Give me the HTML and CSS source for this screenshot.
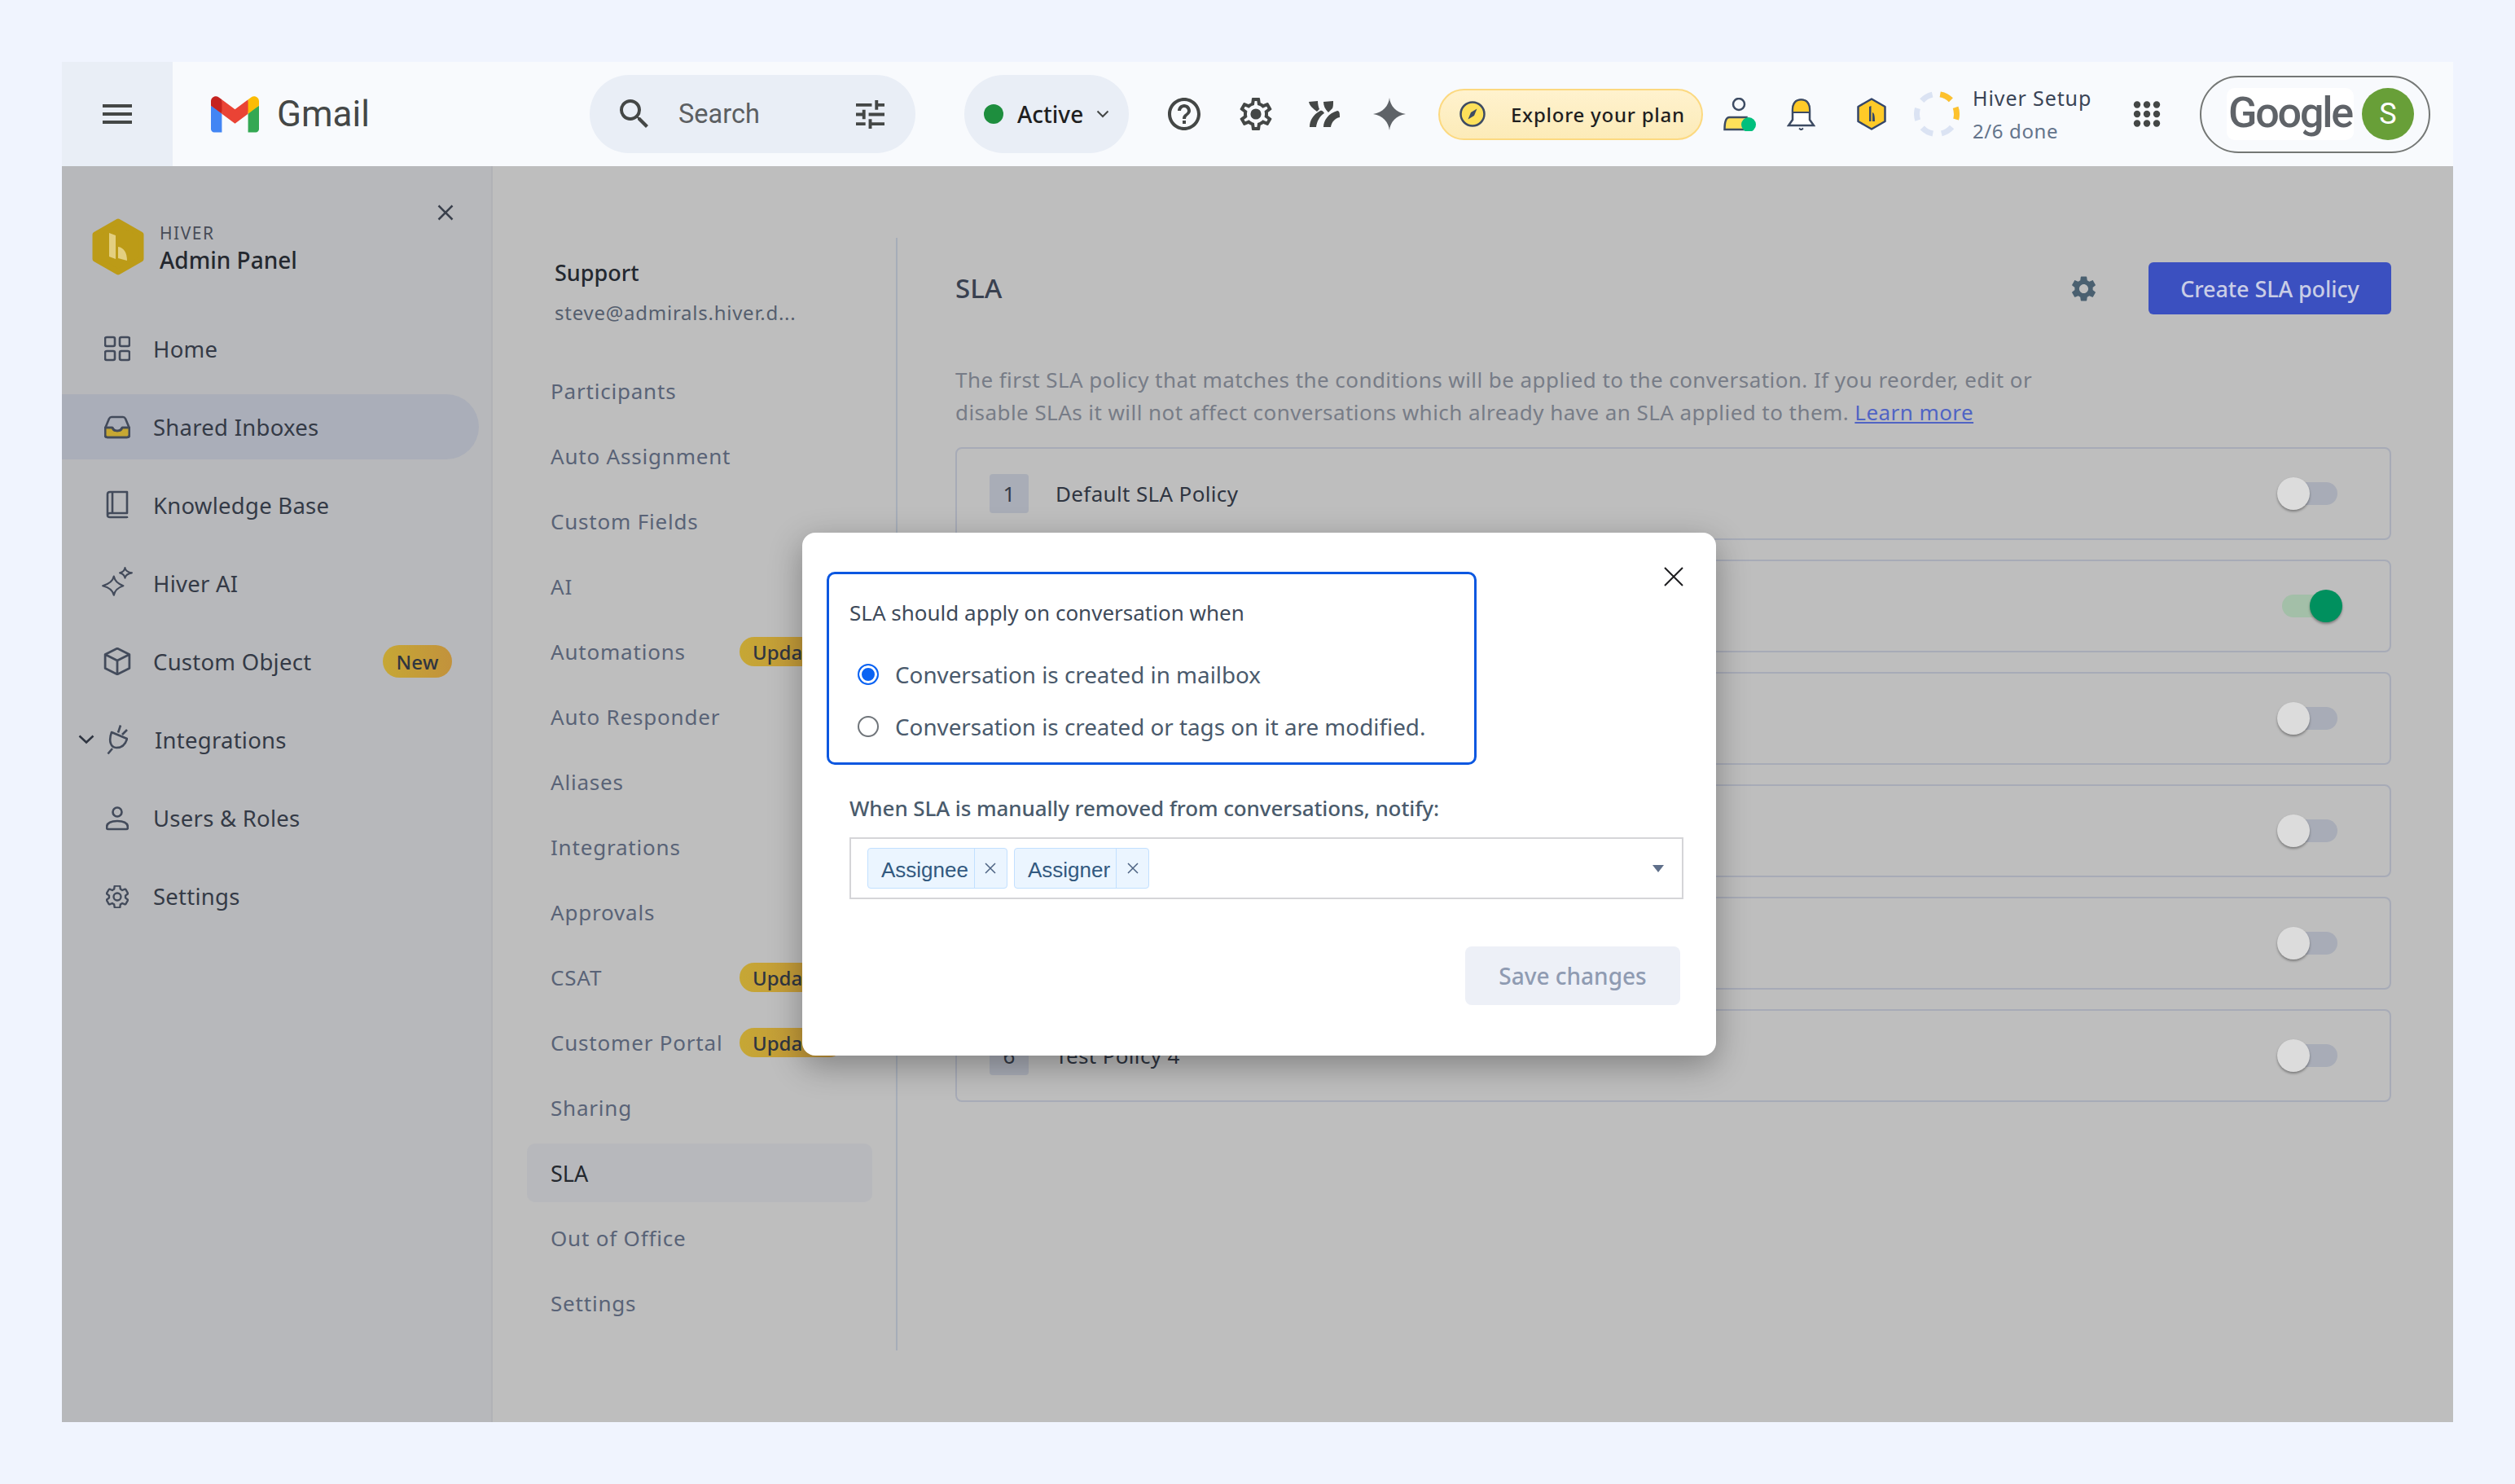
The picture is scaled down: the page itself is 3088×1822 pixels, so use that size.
FILE: index.html
```html
<!DOCTYPE html>
<html lang="en">
<head>
<meta charset="utf-8">
<title>Hiver Admin Panel - SLA</title>
<link rel="stylesheet" href="styles.css">
</head>
<body>
<div class="frame">
  <header class="topbar">
    <div class="menu-col">
      <svg class="menu-icon" viewBox="0 0 36 24"><path d="M0 0h36v4H0zM0 10h36v4H0zM0 20h36v4H0z"/></svg>
    </div>
    <div class="logo-col">
      <svg class="gmail-logo" viewBox="0 0 256 193"><path fill="#4285F4" d="M58.182 192.05V93.14L27.507 65.077 0 49.504v125.091c0 9.658 7.825 17.455 17.455 17.455h40.727Z"/><path fill="#34A853" d="M197.818 192.05h40.727c9.659 0 17.455-7.826 17.455-17.455V49.505l-31.156 17.837-27.026 25.798v98.91Z"/><path fill="#EA4335" d="m58.182 93.14-4.174-38.647 4.174-36.989L128 69.868l69.818-52.364 4.669 34.992-4.669 40.644L128 145.504z"/><path fill="#FBBC04" d="M197.818 17.504V93.14L256 49.504V26.231c0-21.585-24.64-33.89-41.89-20.945l-16.292 12.218Z"/><path fill="#C5221F" d="m0 49.504 26.759 20.07L58.182 93.14V17.504L41.89 5.286C24.61-7.66 0 4.646 0 26.23v23.273Z"/></svg>
      <span class="gmail-word">Gmail</span>
    </div>
    <div class="search">
      <svg class="search-icon" viewBox="3 3 18 18"><path d="M15.5 14h-.79l-.28-.27A6.47 6.47 0 0 0 16 9.5 6.5 6.5 0 1 0 9.5 16c1.61 0 3.09-.59 4.23-1.57l.27.28v.79l5 4.99L20.49 19l-4.99-5zm-6 0C7.01 14 5 11.99 5 9.5S7.01 5 9.5 5 14 7.01 14 9.5 11.99 14 9.5 14z"/></svg>
      <span class="search-text">Search</span>
      <svg class="tune-icon" viewBox="3 3 18 18"><path d="M3 17v2h6v-2H3zM3 5v2h10V5H3zm10 16v-2h8v-2h-8v-2h-2v6h2zM7 9v2H3v2h4v2h2V9H7zm14 4v-2H11v2h10zm-6-4h2V7h4V5h-4V3h-2v6z"/></svg>
    </div>
    <div class="status">
      <span class="status-dot"></span>
      <span class="status-text">Active</span>
      <svg class="status-caret" viewBox="0 0 16 10"><path d="M1.5 1.5 8 8l6.500-6.500" fill="none" stroke="#444746" stroke-width="2"/></svg>
    </div>
    <svg class="tool tool-help" viewBox="2 2 20 20"><path d="M11 18h2v-2h-2v2zm1-16C6.480 2 2 6.480 2 12s4.480 10 10 10 10-4.480 10-10S17.520 2 12 2zm0 18c-4.410 0-8-3.590-8-8s3.590-8 8-8 8 3.590 8 8-3.590 8-8 8zm0-14c-2.210 0-4 1.790-4 4h2c0-1.100.9-2 2-2s2 .9 2 2c0 2-3 1.750-3 5h2c0-2.250 3-2.500 3-5 0-2.210-1.790-4-4-4z"/></svg>
    <svg class="tool tool-gear" viewBox="2 2 20 20"><path d="M19.430 12.980c.04-.32.07-.64.07-.98 0-.34-.03-.66-.07-.98l2.110-1.650c.19-.15.24-.42.12-.64l-2-3.460c-.09-.16-.26-.25-.44-.25-.06 0-.12.01-.17.03l-2.490 1c-.52-.4-1.080-.73-1.690-.98l-.38-2.650C14.460 2.180 14.250 2 14 2h-4c-.25 0-.46.18-.49.42l-.38 2.650c-.61.25-1.170.59-1.690.98l-2.490-1c-.06-.02-.12-.03-.18-.03-.17 0-.34.09-.43.25l-2 3.460c-.13.22-.07.49.12.64l2.110 1.650c-.04.32-.07.65-.07.98 0 .33.03.66.07.98l-2.110 1.650c-.19.15-.24.42-.12.64l2 3.460c.09.16.26.25.44.25.06 0 .12-.01.17-.03l2.490-1c.52.4 1.080.73 1.690.98l.38 2.650c.03.24.24.42.49.42h4c.25 0 .46-.18.49-.42l.38-2.650c.61-.25 1.170-.59 1.690-.98l2.490 1c.06.02.12.03.18.03.17 0 .34-.09.43-.25l2-3.460c.12-.22.07-.49-.12-.64l-2.110-1.650zM17.450 11.270c.04.31.05.52.05.73 0 .21-.02.43-.05.73l-.14 1.130.89.7 1.080.84-.7 1.210-1.270-.51-1.040-.42-.9.68c-.43.32-.84.56-1.250.73l-1.060.43-.16 1.130-.2 1.350h-1.400l-.19-1.350-.16-1.130-1.060-.43c-.43-.18-.83-.41-1.230-.71l-.91-.7-1.060.43-1.270.51-.7-1.210 1.080-.84.89-.7-.14-1.130c-.03-.31-.05-.54-.05-.74s.02-.43.05-.73l.14-1.130-.89-.7-1.080-.84.7-1.210 1.270.51 1.040.42.9-.68c.43-.32.84-.56 1.250-.73l1.060-.43.16-1.130.2-1.350h1.390l.19 1.350.16 1.130 1.060.43c.43.18.83.41 1.230.71l.91.7 1.060-.43 1.270-.51.7 1.210-1.070.85-.89.7.14 1.130z"/><circle cx="12" cy="12" r="3.300"/></svg>
    <svg class="tool-wave" viewBox="0 0 38 33"><path d="M0 1 11 0c0 4 1 8 2 10l-3 3C5 9 1 6 0 1zM18 1 30 0c0 4 0 7-1 9l-5 5c-4-4-6-8-6-13zM1 32c0-8 4-15 13-20 2-1 4 1 5 3-6 4-9 10-10 17zM18 32c0-8 6-17 17-20 3 0 3 4 3 8-6 1-10 6-11 12z"/></svg>
    <svg class="tool tool-spark" viewBox="0 0 40 40"><path d="M20 0c1 10 8 18 20 20-12 2-19 10-20 20-1-10-8-18-20-20C12 18 19 10 20 0z"/></svg>
    <div class="explore">
      <svg class="compass" viewBox="0 0 32 32"><circle cx="16" cy="16" r="14.500" fill="#fde05a" stroke="#3d4b63" stroke-width="2.500"/><path d="M21.500 9.500 18 18l-7.500 4.500L14 14z" fill="#3d4b63"/></svg>
      <span class="explore-text">Explore your plan</span>
    </div>
    <svg class="people" viewBox="0 0 40 41"><circle cx="19" cy="8" r="7" fill="none" stroke="#3d4b63" stroke-width="2.500"/><path d="M1.500 39c0-9 2-15 6-15h21v15z" fill="#fde05a" stroke="#3d4b63" stroke-width="2.500"/><circle cx="31" cy="33" r="9" fill="#00bf7d"/></svg>
    <svg class="bell" viewBox="0 0 35 39"><path d="M7 26V15C7 5 11 1.500 17.500 1.500S28 5 28 15v11l5 7H2z" fill="#fff" stroke="#3d4b63" stroke-width="2.500"/><path d="M7 17v-2C7 5 11 1.500 17.500 1.500S28 5 28 15v2z" fill="#ffca28" stroke="#3d4b63" stroke-width="2"/><path d="M15 36.500l2.500 2 2.500-2" fill="none" stroke="#3d4b63" stroke-width="2"/></svg>
    <svg class="hexa" viewBox="0 0 36 40"><path d="M18 1.500 34.500 11v18L18 38.500 1.500 29V11z" fill="#ffca28" stroke="#34466a" stroke-width="2.500" stroke-linejoin="round"/><path d="M15 11l2.500-1v19H15zM19 18c3 1 3 7 3 11h-3z" fill="#34466a"/></svg>
    <svg class="ring" viewBox="0 0 56 56"><circle cx="28" cy="28" r="24.500" fill="none" stroke="#dbe3f3" stroke-width="7" stroke-dasharray="15 10.660" transform="rotate(-80 28 28)"/><circle cx="28" cy="28" r="24.500" fill="none" stroke="#fdc12d" stroke-width="7" stroke-dasharray="15 10.660 15 200" transform="rotate(-80 28 28)"/></svg>
    <div class="setup">
      <span class="setup-title">Hiver Setup</span>
      <span class="setup-sub">2/6 done</span>
    </div>
    <svg class="apps" viewBox="0 0 34 32"><g fill="#444746"><circle cx="5" cy="4.500" r="4.200"/><circle cx="17" cy="4.500" r="4.200"/><circle cx="29" cy="4.500" r="4.200"/><circle cx="5" cy="16" r="4.200"/><circle cx="17" cy="16" r="4.200"/><circle cx="29" cy="16" r="4.200"/><circle cx="5" cy="27.500" r="4.200"/><circle cx="17" cy="27.500" r="4.200"/><circle cx="29" cy="27.500" r="4.200"/></g></svg>
    <div class="account">
      <span class="google-word">Google</span>
      <span class="avatar">S</span>
    </div>
  </header>

  <div class="workspace">
    <aside class="sidebar">
      <div class="side-head">
        <div class="brand">
          <svg class="brand-hex" viewBox="0 0 64 70"><path d="M32 4 60 20v30L32 66 4 50V20z" fill="#bc9b17" stroke="#bc9b17" stroke-width="7" stroke-linejoin="round"/><path d="M21 18l8 3v29l-8-3zM32 35c7 1 11 7 11 17l-11-3z" fill="#e3cf80"/></svg>
          <div class="brand-text">
            <span class="brand-top">HIVER</span>
            <span class="brand-name">Admin Panel</span>
          </div>
        </div>
        <svg class="side-close" viewBox="0 0 20 20"><path d="M1.500 1.500l17 17M18.500 1.500l-17 17" stroke="#3a404c" stroke-width="2.500"/></svg>
      </div>
      <nav class="side-nav">
        <a class="side-item"><span class="side-icon"><svg viewBox="0 0 32 32" class="ic"><rect x="1" y="2" width="12" height="11" rx="2"/><rect x="19" y="2" width="12" height="11" rx="2"/><rect x="1" y="19" width="12" height="11" rx="2"/><rect x="19" y="19" width="12" height="11" rx="2"/></svg></span><span>Home</span></a>
        <a class="side-item is-active"><span class="side-icon"><svg viewBox="0 0 32 32" class="ic"><path d="M1 17h9c1 3 3 4 6 4s5-1 6-4h9v9c0 2-1 3-3 3H4c-2 0-3-1-3-3z" fill="#c6a733"/><path d="M1 26v-8L6 6c.5-1 1.500-2 3-2h14c1.500 0 2.500 1 3 2l5 12v8c0 2-1 3-3 3H4c-2 0-3-1-3-3zM1 17h9c1 3 3 4 6 4s5-1 6-4h9"/></svg></span><span>Shared Inboxes</span></a>
        <a class="side-item"><span class="side-icon"><svg viewBox="0 0 28 36" class="ic ic-book"><path d="M2 30V5c0-2 1-3 3-3h21v26H5c-2 0-3 1-3 2.500S3 33 5 33h21v1M8 2v26"/></svg></span><span>Knowledge Base</span></a>
        <a class="side-item"><span class="side-icon"><svg viewBox="0 0 38 38" class="ic ic-ai"><path d="M15 11c1 5 5 9 11 11-6 2-10 5-11 11-1-6-5-9-13-11 8-2 12-6 13-11zM28 1c.5 3 2.500 5 8 6-5.500 1-7.500 3-8 6-.5-3-2.500-5-6-6 3.500-1 5.500-3 6-6z"/></svg></span><span>Hiver AI</span></a>
        <a class="side-item"><span class="side-icon"><svg viewBox="0 0 32 32" class="ic ic-box"><path d="M16 1 30 8v16l-14 7-14-7V8zM2 8l14 7 14-7M16 15v16"/></svg></span><span>Custom Object</span><span class="new-badge">New</span></a>
        <a class="side-item side-item-tree"><svg class="tree-caret" viewBox="0 0 20 12"><path d="M1.500 1.500 10 9.500l8.500-8" fill="none" stroke="#2f3541" stroke-width="2.500"/></svg><span class="side-icon side-icon-plug"><svg viewBox="0 0 26 38" class="ic ic-plug"><path d="M1.500 36.500 7 30M17 1.500l-3 9M25 7l-6 6M6 10l19 8c-2 7-7 11-13 11-7 0-10-8-6-19z"/></svg></span><span>Integrations</span></a>
        <a class="side-item"><span class="side-icon"><svg viewBox="0 0 28 30" class="ic ic-user"><circle cx="14" cy="7" r="5.500"/><path d="M3 28c-1.500 0-2-1-2-2 0-5 4-8 13-8s13 3 13 8c0 1-.5 2-2 2z"/></svg></span><span>Users &amp; Roles</span></a>
        <a class="side-item"><span class="side-icon"><svg viewBox="2 2 20 20" class="ic ic-thin"><path d="M19.140 12.940c.04-.3.06-.61.06-.94 0-.32-.02-.64-.07-.94l2.030-1.580c.18-.14.23-.41.12-.61l-1.920-3.320c-.12-.22-.37-.29-.59-.22l-2.390.96c-.5-.38-1.030-.7-1.620-.94l-.36-2.540c-.04-.24-.24-.41-.48-.41h-3.840c-.24 0-.43.17-.47.41l-.36 2.540c-.59.24-1.130.57-1.620.94l-2.390-.96c-.22-.08-.47 0-.59.22L2.740 8.870c-.12.21-.08.47.12.61l2.030 1.580c-.05.3-.09.63-.09.94s.02.64.07.94l-2.030 1.580c-.18.14-.23.41-.12.61l1.920 3.320c.12.22.37.29.59.22l2.390-.96c.5.38 1.030.7 1.620.94l.36 2.540c.05.24.24.41.48.41h3.840c.24 0 .44-.17.47-.41l.36-2.540c.59-.24 1.130-.56 1.620-.94l2.390.96c.22.08.47 0 .59-.22l1.920-3.320c.12-.22.07-.47-.12-.61l-2.010-1.580z"/><circle cx="12" cy="12" r="3.200"/></svg></span><span>Settings</span></a>
      </nav>
    </aside>

    <section class="subnav">
      <div class="inbox-head">
        <div class="inbox-name">Support</div>
        <div class="inbox-mail">steve@admirals.hiver.d...</div>
      </div>
      <nav class="sub-list">
        <a class="sub-item">Participants</a>
        <a class="sub-item">Auto Assignment</a>
        <a class="sub-item">Custom Fields</a>
        <a class="sub-item">AI</a>
        <a class="sub-item">Automations<span class="up-badge">Updated</span></a>
        <a class="sub-item">Auto Responder</a>
        <a class="sub-item">Aliases</a>
        <a class="sub-item">Integrations</a>
        <a class="sub-item">Approvals</a>
        <a class="sub-item">CSAT<span class="up-badge">Updated</span></a>
        <a class="sub-item">Customer Portal<span class="up-badge">Updated</span></a>
        <a class="sub-item">Sharing</a>
        <a class="sub-item is-active">SLA</a>
        <a class="sub-item">Out of Office</a>
        <a class="sub-item">Settings</a>
      </nav>
    </section>

    <main class="content">
      <div class="content-head">
        <h1 class="content-title">SLA</h1>
        <svg class="content-gear" viewBox="3 2 18 20"><path d="M19.140 12.940c.04-.3.06-.61.06-.94 0-.32-.02-.64-.07-.94l2.030-1.580c.18-.14.23-.41.12-.61l-1.920-3.320c-.12-.22-.37-.29-.59-.22l-2.390.96c-.5-.38-1.030-.7-1.620-.94l-.36-2.540c-.04-.24-.24-.41-.48-.41h-3.840c-.24 0-.43.17-.47.41l-.36 2.540c-.59.24-1.130.57-1.620.94l-2.390-.96c-.22-.08-.47 0-.59.22L2.740 8.870c-.12.21-.08.47.12.61l2.030 1.580c-.05.3-.09.63-.09.94s.02.64.07.94l-2.030 1.580c-.18.14-.23.41-.12.61l1.920 3.320c.12.22.37.29.59.22l2.390-.96c.5.38 1.030.7 1.620.94l.36 2.540c.05.24.24.41.48.41h3.840c.24 0 .44-.17.47-.41l.36-2.540c.59-.24 1.130-.56 1.620-.94l2.390.96c.22.08.47 0 .59-.22l1.920-3.320c.12-.22.07-.47-.12-.61l-2.010-1.580zM12 15.600c-1.980 0-3.600-1.620-3.600-3.600s1.620-3.600 3.600-3.600 3.600 1.620 3.600 3.600-1.620 3.600-3.600 3.600z"/></svg>
        <button class="create-btn">Create SLA policy</button>
      </div>
      <p class="content-desc">The first SLA policy that matches the conditions will be applied to the conversation. If you reorder, edit or<br>disable SLAs it will not affect conversations which already have an SLA applied to them. <a class="learn">Learn more</a></p>
      <div class="policies">
        <div class="policy"><span class="policy-num">1</span><span class="policy-name">Default SLA Policy</span><span class="toggle"><span class="track"></span><span class="knob"></span></span></div>
        <div class="policy"><span class="policy-num"></span><span class="toggle is-on"><span class="track"></span><span class="knob"></span></span></div>
        <div class="policy"><span class="policy-num"></span><span class="toggle"><span class="track"></span><span class="knob"></span></span></div>
        <div class="policy"><span class="policy-num"></span><span class="toggle"><span class="track"></span><span class="knob"></span></span></div>
        <div class="policy"><span class="policy-num"></span><span class="toggle"><span class="track"></span><span class="knob"></span></span></div>
        <div class="policy"><span class="policy-num">6</span><span class="policy-name">Test Policy 4</span><span class="toggle"><span class="track"></span><span class="knob"></span></span></div>
      </div>
    </main>
  </div>

  <div class="modal">
    <svg class="modal-close" viewBox="0 0 24 24"><path d="M1 1l22 22M23 1 1 23" stroke="#1d1d1f" stroke-width="2"/></svg>
    <div class="apply-box">
      <div class="apply-title">SLA should apply on conversation when</div>
      <label class="radio-row"><span class="radio is-checked"></span>Conversation is created in mailbox</label>
      <label class="radio-row"><span class="radio"></span>Conversation is created or tags on it are modified.</label>
    </div>
    <div class="notify-label">When SLA is manually removed from conversations, notify:</div>
    <div class="select">
      <span class="chip"><span class="chip-label">Assignee</span><span class="chip-x"><svg viewBox="0 0 14 14"><path d="M1 1l12 12M13 1 1 13" stroke="#4d6383" stroke-width="1.500"/></svg></span></span>
      <span class="chip"><span class="chip-label">Assigner</span><span class="chip-x"><svg viewBox="0 0 14 14"><path d="M1 1l12 12M13 1 1 13" stroke="#4d6383" stroke-width="1.500"/></svg></span></span>
      <svg class="select-caret" viewBox="0 0 14 9"><path d="M0 0h14L7 9z"/></svg>
    </div>
    <div class="modal-foot"><button class="save-btn">Save changes</button></div>
  </div>
</div>
</body>
</html>
```
FILE: styles.css
```css
* { box-sizing: border-box; }
html, body { margin: 0; padding: 0; }
body {
  width: 3088px;
  height: 1822px;
  padding: 76px;
  background: #f0f4fe;
  font-family: "Noto Sans", "Open Sans", sans-serif;
  overflow: hidden;
}
a { display: flex; }
.frame {
  position: relative;
  width: 2936px;
  height: 1670px;
  display: flex;
  flex-direction: column;
  background: #bebebe;
}

/* top bar */
.topbar {
  flex: 0 0 128px;
  display: flex;
  align-items: center;
  background: #f8fafd;
}
.menu-col {
  width: 136px;
  height: 128px;
  display: flex;
  align-items: center;
  justify-content: center;
  background: #e9eef6;
}
.menu-icon { width: 36px; height: 24px; fill: #444746; }
.logo-col {
  width: 512px;
  display: flex;
  align-items: center;
  padding-left: 47px;
}
.gmail-logo { width: 59px; height: 45px; }
.gmail-word {
  margin-left: 22px;
  font-family: Roboto, sans-serif;
  font-size: 44px;
  line-height: 50px;
  color: #444746;
}
.search {
  width: 400px;
  height: 96px;
  display: flex;
  align-items: center;
  padding: 0 37px;
  border-radius: 48px;
  background: #e9eef6;
}
.search-icon { width: 36px; height: 36px; fill: #444746; }
.search-text {
  margin-left: 36px;
  font-family: Roboto, sans-serif;
  font-size: 32.500px;
  color: #5c5f62;
}
.tune-icon { margin-left: auto; width: 37px; height: 35px; fill: #444746; }
.status {
  width: 202px;
  height: 96px;
  margin-left: 60px;
  display: flex;
  align-items: center;
  padding-left: 24px;
  border-radius: 48px;
  background: #e9eef6;
}
.status-dot { width: 24px; height: 24px; border-radius: 50%; background: #1e8e3e; }
.status-text {
  margin-left: 17px;
  font-size: 28px;
  font-weight: 500;
  color: #1f1f1f;
}
.status-caret { margin-left: 16px; width: 16px; height: 10px; }
.tool { width: 40px; height: 40px; fill: #444746; flex: none; }
.tool-help { margin-left: 48px; }
.tool-gear { margin-left: 48px; }
.tool-wave { margin-left: 45px; width: 38px; height: 33px; fill: #444746; flex: none; }
.tool-spark { margin-left: 41px; fill: #5f6368; }
.explore {
  width: 325px;
  height: 63px;
  margin-left: 40px;
  display: flex;
  align-items: center;
  padding-left: 24px;
  border: 2px solid #fcd980;
  border-radius: 32px;
  background: linear-gradient(#fff2ce, #fcebb8);
}
.compass { width: 32px; height: 32px; }
.explore-text {
  margin-left: 31px;
  font-size: 24px;
  font-weight: 500;
  letter-spacing: 0.75px;
  color: #1f1f1f;
}
.people { width: 40px; height: 41px; margin-left: 25px; flex: none; }
.bell { width: 35px; height: 39px; margin-left: 38px; flex: none; }
.hexa { width: 36px; height: 40px; margin-left: 51px; flex: none; }
.ring { width: 56px; height: 56px; margin-left: 34px; flex: none; }
.setup {
  width: 145px;
  margin-left: 16px;
  display: flex;
  flex-direction: column;
  gap: 7px;
  white-space: nowrap;
}
.setup-title { font-size: 25px; line-height: 34px; color: #3a4456; letter-spacing: 0.9px; }
.setup-sub { font-size: 24px; line-height: 34px; color: #64748b; letter-spacing: 0.6px; }
.apps { width: 34px; height: 32px; margin-left: 52px; flex: none; }
.account {
  width: 283px;
  height: 95px;
  margin-left: 48px;
  display: flex;
  align-items: center;
  padding-left: 31px;
  border: 2px solid #747775;
  border-radius: 48px;
}
.google-word {
  width: 156px;
  height: 64px;
  display: flex;
  align-items: center;
  justify-content: center;
  padding-bottom: 4px;
  border-radius: 10px;
  background: #fff;
  font-family: Roboto, sans-serif;
  font-size: 52px;
  font-weight: 500;
  letter-spacing: -2.2px;
  color: #5f6368;
}
.avatar {
  width: 64px;
  height: 64px;
  margin-left: 10px;
  display: flex;
  align-items: center;
  justify-content: center;
  border-radius: 50%;
  background: #689f38;
  font-family: Roboto, sans-serif;
  font-size: 36px;
  color: #fff;
}

/* workspace */
.workspace { flex: 1; display: flex; min-height: 0; }

.sidebar {
  width: 529px;
  flex: none;
  background: #b7b8bb;
  border-right: 2px solid #b1b2b6;
}
.side-head {
  display: flex;
  justify-content: space-between;
  padding: 47px 46px 0 37px;
}
.brand { display: flex; align-items: center; margin-top: 17px; }
.brand-hex { width: 64px; height: 70px; }
.brand-text { margin-left: 19px; display: flex; flex-direction: column; }
.brand-top {
  margin-top: 2px;
  font-size: 21px;
  line-height: 28px;
  letter-spacing: 1.500px;
  color: #474c57;
}
.brand-name {
  margin-top: 1px;
  font-size: 28px;
  line-height: 36px;
  font-weight: 500;
  color: #24282f;
}
.side-close { width: 20px; height: 20px; }
.side-nav {
  margin-top: 50px;
  display: flex;
  flex-direction: column;
  gap: 16.100px;
}
.side-item {
  height: 80px;
  width: 512px;
  display: flex;
  align-items: center;
  padding: 0 33px 0 52px;
  border-radius: 0 40px 40px 0;
  font-size: 27.500px;
  letter-spacing: 0.25px;
  color: #343a46;
}
.side-item.is-active { background: #aaaeb9; }
.side-item-tree { padding-left: 20px; }
.side-icon {
  width: 32px;
  margin-right: 28px;
  display: flex;
  justify-content: center;
  flex: none;
}
.side-icon-plug { margin-left: 15px; margin-right: 33px; width: 26px; }
.tree-caret { width: 20px; height: 12px; flex: none; }
.ic {
  width: 32px;
  height: 32px;
  fill: none;
  stroke: #434b5b;
  stroke-width: 2.600;
  stroke-linejoin: round;
  flex: none;
}
.ic-ai { width: 40px; height: 40px; stroke-width: 2; }
.ic-box { width: 34px; height: 34px; }
.ic-book { width: 28px; height: 36px; }
.ic-plug { width: 26px; height: 38px; }
.ic-user { width: 28px; height: 30px; }
.ic-thin { width: 28px; height: 28px; stroke-width: 1.700; }
.new-badge {
  margin-left: auto;
  width: 85px;
  height: 40px;
  display: flex;
  align-items: center;
  justify-content: center;
  border-radius: 20px;
  background: linear-gradient(90deg, #c6a735, #c2923c);
  font-size: 24px;
  font-weight: 500;
  color: #2f3541;
}

.subnav {
  width: 497px;
  flex: none;
  margin-top: 88px;
  margin-bottom: 88px;
  border-right: 2px solid #a6adb8;
  overflow: hidden;
}
.inbox-head { padding: 23px 0 0 76px; }
.inbox-name {
  font-size: 27px;
  line-height: 40px;
  font-weight: 500;
  color: #24282f;
}
.inbox-mail {
  margin-top: 11px;
  font-size: 24px;
  line-height: 36px;
  letter-spacing: 0.75px;
  color: #555e6e;
}
.sub-list {
  margin: 42px 0 0 42px;
  width: 424px;
  display: flex;
  flex-direction: column;
  gap: 8px;
}
.sub-item {
  height: 72px;
  display: flex;
  align-items: center;
  justify-content: space-between;
  padding: 0 35px 0 29px;
  border-radius: 10px;
  font-size: 26px;
  letter-spacing: 0.8px;
  color: #596377;
}
.sub-item.is-active { background: #b7b8bc; color: #24282f; font-size: 27px; letter-spacing: 0; }
.up-badge {
  width: 128px;
  height: 36px;
  display: flex;
  align-items: center;
  padding-left: 16px;
  border-radius: 18px;
  background: linear-gradient(90deg, #c6a735, #c2923c);
  font-size: 24px;
  font-weight: 500;
  letter-spacing: 0;
  color: #2f3541;
}

.content { flex: 1; min-width: 0; padding: 118px 76px 0 71px; }
.content-head { height: 64px; display: flex; align-items: center; }
.content-title {
  margin: 0 0 2px;
  font-size: 33px;
  font-weight: 500;
  color: #394150;
}
.content-gear { margin-left: auto; width: 29px; height: 31px; fill: #4a6070; }
.create-btn {
  margin-left: 65px;
  width: 298px;
  height: 64px;
  border: 0;
  border-radius: 6px;
  background: #3b50c0;
  font-family: inherit;
  font-size: 27px;
  font-weight: 500;
  letter-spacing: -0.1px;
  color: #c9cde6;
}
.content-desc {
  margin: 61px 0 0;
  font-size: 26px;
  line-height: 39.500px;
  letter-spacing: 0.44px;
  color: #777c87;
  white-space: nowrap;
}
.learn { display: inline; color: #5064c4; text-decoration: underline; }
.policies {
  margin-top: 23px;
  display: flex;
  flex-direction: column;
  gap: 24px;
}
.policy {
  height: 114px;
  display: flex;
  align-items: center;
  padding: 0 58px 0 40px;
  border: 2px solid #a7abb7;
  border-radius: 8px;
}
.policy-num {
  width: 48px;
  height: 48px;
  display: flex;
  align-items: center;
  justify-content: center;
  border-radius: 4px;
  background: #a9adb7;
  font-size: 26px;
  color: #343a46;
}
.policy-name {
  margin-left: 33px;
  font-size: 26px;
  letter-spacing: 0.35px;
  color: #2f3541;
}
.toggle { position: relative; margin-left: auto; width: 80px; height: 40px; }
.track {
  position: absolute;
  left: 16px;
  top: 6px;
  width: 58px;
  height: 28px;
  border-radius: 14px;
  background: #a8acb7;
}
.knob {
  position: absolute;
  left: 0;
  top: 0;
  width: 40px;
  height: 40px;
  border-radius: 50%;
  background: #dcdcdc;
  box-shadow: 0 2px 3px rgba(0, 0, 0, .35);
}
.toggle.is-on .track { left: 6px; background: #a3bfa8; }
.toggle.is-on .knob { left: 40px; background: #00905e; }

/* modal */
.modal {
  position: absolute;
  left: 909px;
  top: 578px;
  width: 1122px;
  height: 642px;
  padding: 48px 40px 0 58px;
  border-radius: 16px;
  background: #fff;
  box-shadow: 0 12px 40px rgba(0, 0, 0, .32);
}
.modal-close { position: absolute; right: 40px; top: 42px; width: 24px; height: 24px; }
.apply-box {
  width: 798px;
  height: 237px;
  margin-left: -28px;
  padding: 30px 0 0 25px;
  border: 3px solid #0b57e0;
  border-radius: 10px;
}
.apply-title {
  font-size: 26px;
  line-height: 34px;
  color: #3e4a5a;
}
.radio-row {
  display: flex;
  align-items: center;
  height: 40px;
  margin-top: 24px;
  font-size: 27.800px;
  color: #4a5a6c;
}
.apply-title + .radio-row { margin-top: 39px; }
.radio {
  width: 26px;
  height: 26px;
  margin: 0 20px 0 10px;
  border: 2px solid #70757a;
  border-radius: 50%;
  background: #fff;
  flex: none;
}
.radio.is-checked {
  border-color: #0b63f3;
  background: #0b63f3;
  box-shadow: inset 0 0 0 3px #fff;
}
.notify-label {
  margin-top: 34px;
  font-size: 26px;
  line-height: 38px;
  font-weight: 500;
  letter-spacing: -0.1px;
  color: #4a5b6c;
}
.select {
  width: 1024px;
  height: 76px;
  margin-top: 17px;
  display: flex;
  align-items: center;
  gap: 8px;
  padding: 0 0 0 20px;
  border: 2px solid #d5d5d8;
}
.chip {
  height: 50px;
  display: flex;
  align-items: stretch;
  border: 1px solid #c2e0ff;
  border-radius: 4px;
  background: #ebf5ff;
  font-family: "Liberation Sans", Arial, sans-serif;
  font-size: 26px;
  color: #32597f;
}
.chip-label { display: flex; align-items: center; padding: 4px 7px 0 16px; }
.chip-x {
  width: 40px;
  display: flex;
  align-items: center;
  justify-content: center;
  border-left: 1px solid #c2e0ff;
}
.chip-x svg { width: 14px; height: 14px; }
.select-caret { margin-left: auto; margin-right: 22px; width: 14px; height: 9px; fill: #5f6f8a; }
.modal-foot { width: 1020px; margin-top: 58px; display: flex; justify-content: flex-end; }
.save-btn {
  width: 264px;
  height: 72px;
  border: 0;
  border-radius: 8px;
  background: #edf0f7;
  font-family: inherit;
  font-size: 28px;
  font-weight: 500;
  color: #8f9bb2;
}
```
